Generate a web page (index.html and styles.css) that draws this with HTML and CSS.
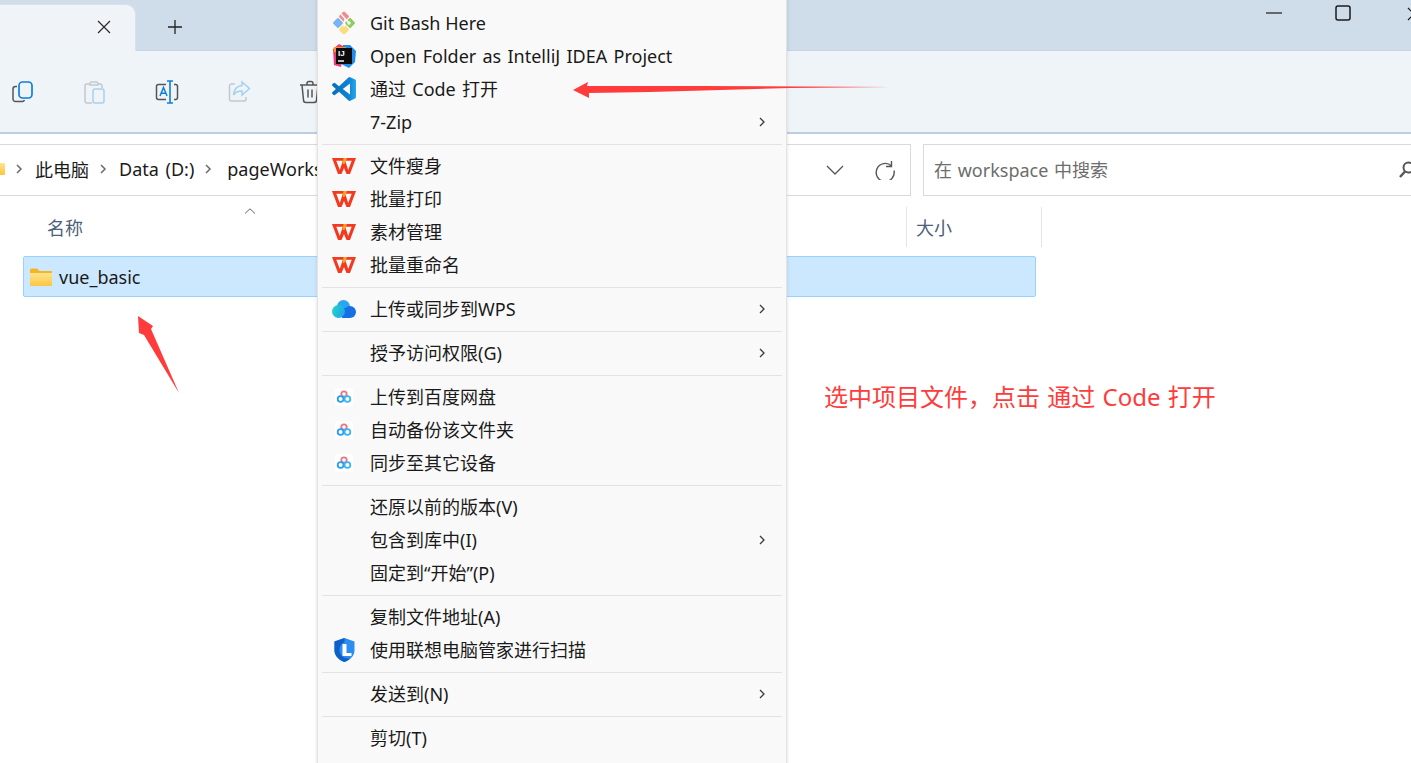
FILE: index.html
```html
<!DOCTYPE html>
<html>
<head>
    <title>vue_basic - 通过 Code 打开</title>
    <link rel="stylesheet" href="styles.css">
</head>
<body>
    <svg class="defs" width="0" height="0">
        <defs>
            <linearGradient id="cloudGrad" x1="0" y1="0" x2="1" y2="0.4">
                <stop offset="0" stop-color="#1fd8c4"/>
                <stop offset="1" stop-color="#23a8ea"/>
            </linearGradient>
            <linearGradient id="codeGrad" x1="0" y1="0" x2="1" y2="0">
                <stop offset="0" stop-color="#0c6fb8"/>
                <stop offset="0.7" stop-color="#0b84d4"/>
                <stop offset="1" stop-color="#2aa7ee"/>
            </linearGradient>
            <linearGradient id="folderGrad" x1="0" y1="0" x2="0" y2="1">
                <stop offset="0" stop-color="#ffe38f"/>
                <stop offset="1" stop-color="#fcc63f"/>
            </linearGradient>
            <symbol id="wps" viewBox="0 0 24 18">
                <path fill="#f4391f" fill-rule="evenodd" d="M0 1h24l-6 16h-3.500L12 11 9.500 17H6zM4.300 3.800L7.800 13l3-9.200zM13.200 3.800L16.200 13l3.500-9.200z"/>
                <path fill="#f8a51d" d="M11.500 1h3.500l-2.500 6h-1.800z"/>
            </symbol>
            <symbol id="baidu" viewBox="0 0 18 18">
                <rect width="18" height="18" rx="4" fill="#fff"/>
                <circle cx="9" cy="6" r="2.700" fill="none" stroke="#e8748a" stroke-width="1.800"/>
                <circle cx="5.600" cy="11" r="2.900" fill="none" stroke="#2b9cf0" stroke-width="1.800"/>
                <circle cx="12.400" cy="11" r="2.900" fill="none" stroke="#35b8f2" stroke-width="1.800"/>
            </symbol>
            <symbol id="more" viewBox="0 0 8 12">
                <path d="M2 2l4 4-4 4" fill="none" stroke="#3c3c3c" stroke-width="1.300"/>
            </symbol>
            <symbol id="crumb" viewBox="0 0 8 12">
                <path d="M2 2l4 4-4 4" fill="none" stroke="#6a6a6a" stroke-width="1.500"/>
            </symbol>
        </defs>
    </svg>

    <div class="explorer">
        <div class="tabstrip">
            <div class="tab">
                <svg class="tab-close" width="14" height="14" viewBox="0 0 14 14"><path d="M1 1l12 12M13 1L1 13" stroke="#2a2a2a" stroke-width="1.200"/></svg>
            </div>
            <svg class="tab-add" width="16" height="16" viewBox="0 0 16 16"><path d="M8 1v14M1 8h14" stroke="#222" stroke-width="1.300"/></svg>
            <div class="winctl">
                <svg class="win-min" width="16" height="2" viewBox="0 0 16 2"><path d="M0 1h16" stroke="#1c1c1c" stroke-width="1.200"/></svg>
                <svg class="win-max" width="16" height="16" viewBox="0 0 16 16"><rect x="1" y="1" width="14" height="14" rx="2" fill="none" stroke="#1c1c1c" stroke-width="1.500"/></svg>
                <svg class="win-close" width="14" height="14" viewBox="0 0 14 14"><path d="M1 1l12 12M13 1L1 13" stroke="#1c1c1c" stroke-width="1.200"/></svg>
            </div>
        </div>

        <div class="toolbar">
            <svg class="tool" width="24" height="24" viewBox="0 0 24 24">
                <path d="M6 6.500H4.500A2.500 2.500 0 0 0 2 9v10a2.500 2.500 0 0 0 2.500 2.500H11a2.500 2.500 0 0 0 2.500-1.500" fill="none" stroke="#555" stroke-width="1.500"/>
                <rect x="8" y="2" width="13" height="16" rx="3.500" fill="none" stroke="#0f7fd6" stroke-width="1.700"/>
            </svg>
            <svg class="tool" width="24" height="24" viewBox="0 0 24 24">
                <path d="M7 4H4a2 2 0 0 0-2 2v15a2 2 0 0 0 2 2h5" fill="none" stroke="#c4c8cc" stroke-width="1.500"/>
                <path d="M7 5V3.500A1.500 1.500 0 0 1 8.500 2h5A1.500 1.500 0 0 1 15 3.500V5zM15 4h2a2 2 0 0 1 2 2v2" fill="none" stroke="#c4c8cc" stroke-width="1.500"/>
                <rect x="10" y="9" width="11" height="14" rx="2" fill="none" stroke="#a6d0f0" stroke-width="1.500"/>
            </svg>
            <svg class="tool" width="24" height="24" viewBox="0 0 24 24">
                <path d="M11 4.500H3.500A2 2 0 0 0 1.500 6.500v11a2 2 0 0 0 2 2H11M19 4.500h1.500a2 2 0 0 1 2 2v11a2 2 0 0 1-2 2H19" fill="none" stroke="#555" stroke-width="1.500"/>
                <path d="M15 1v22M12 1h6M12 23h6" fill="none" stroke="#0f7fd6" stroke-width="1.600"/>
                <path d="M5 16l3.500-8.500L12 16M6.200 13.300h4.600" fill="none" stroke="#0f7fd6" stroke-width="1.500"/>
            </svg>
            <svg class="tool" width="24" height="24" viewBox="0 0 24 24">
                <path d="M8 4H4.500a2 2 0 0 0-2 2v13a2 2 0 0 0 2 2H17a2 2 0 0 0 2-2v-2" fill="none" stroke="#c4c8cc" stroke-width="1.500"/>
                <path d="M15 2l7.500 6.500L15 15v-4c-4 0-6.500 1-8.500 4 .5-5 3.500-9 8.500-9.500z" fill="none" stroke="#a6d0f0" stroke-width="1.500"/>
            </svg>
            <svg class="tool" width="24" height="24" viewBox="0 0 24 24">
                <path d="M1 5h20M8 5V3.500A2 2 0 0 1 10 1.500h2a2 2 0 0 1 2 2V5M3 5l1.500 15a2.500 2.500 0 0 0 2.500 2.500h8a2.500 2.500 0 0 0 2.500-2.500L19 5M9 9.500v8M13 9.500v8" fill="none" stroke="#555" stroke-width="1.500"/>
            </svg>
        </div>

        <div class="addressrow">
            <div class="addressbox">
                <div class="crumbs">
                    <svg class="crumb-folder" width="5" height="12" viewBox="0 0 5 12"><rect x="-4" width="9" height="12" rx="1" fill="url(#folderGrad)"/></svg>
                    <svg class="crumb-sep" width="8" height="12"><use href="#crumb"/></svg>
                    <span>此电脑</span>
                    <svg class="crumb-sep" width="8" height="12"><use href="#crumb"/></svg>
                    <span>Data (D:)</span>
                    <svg class="crumb-sep" width="8" height="12"><use href="#crumb"/></svg>
                    <span class="crumb-last">pageWorkspace</span>
                </div>
                <div class="address-tools">
                    <svg width="18" height="10" viewBox="0 0 18 10"><path d="M1 1l8 8 8-8" fill="none" stroke="#555" stroke-width="1.300"/></svg>
                    <svg width="20" height="20" viewBox="0 0 20 20"><path d="M16.500 1v5.500H11M16.500 6A9 9 0 1 0 19 10.500" fill="none" stroke="#555" stroke-width="1.400"/></svg>
                </div>
            </div>
            <div class="searchbox">
                <span class="search-text">在 workspace 中搜索</span>
                <svg class="search-icon" width="16" height="18" viewBox="0 0 16 18"><circle cx="9.500" cy="6.500" r="5" fill="none" stroke="#555" stroke-width="2"/><path d="M6 10.500L1 16" stroke="#555" stroke-width="2.400"/></svg>
            </div>
        </div>

        <div class="columns">
            <div class="col col-name">
                名称
                <svg class="sort" width="12" height="6" viewBox="0 0 12 6"><path d="M1 5.500L6 .8l5 4.700" fill="none" stroke="#666" stroke-width="1"/></svg>
            </div>
            <div class="col col-size">大小</div>
        </div>

        <div class="filerow">
            <svg width="22" height="18" viewBox="0 0 22 18"><path d="M0 2a1.500 1.500 0 0 1 1.500-1.500H7L9.500 3H22v14a1 1 0 0 1-1 1H1a1 1 0 0 1-1-1z" fill="#f3b526"/><path d="M0 5h22v12a1 1 0 0 1-1 1H1a1 1 0 0 1-1-1z" fill="url(#folderGrad)"/></svg>
            <span>vue_basic</span>
        </div>
    </div>

    <div class="menu">
        <div class="item"><span class="icon"><svg width="24" height="24" viewBox="0 0 24 24"><circle cx="12" cy="16" r="6" fill="#fbd75b"/></svg></span></div>
        <div class="item">
            <span class="icon"><svg width="24" height="24" viewBox="0 0 24 24">
                <rect x="8.200" y="1.700" width="7.600" height="7.600" rx="1" transform="rotate(45 12 5.500)" fill="#f48a8a"/>
                <rect x="2.200" y="8.200" width="7.600" height="7.600" rx="1" transform="rotate(45 6 12)" fill="#78b4f2"/>
                <rect x="14.200" y="8.200" width="7.600" height="7.600" rx="1" transform="rotate(45 18 12)" fill="#8ccc5c"/>
                <rect x="8.200" y="14.700" width="7.600" height="7.600" rx="1" transform="rotate(45 12 18.500)" fill="#fbdc7c"/>
                <path d="M9 3l8 9M13 8l-1 8" stroke="#fff" stroke-width="1.400"/>
                <circle cx="17" cy="12" r="1.700" fill="#fff"/>
            </svg></span>
            <span class="label latin">Git Bash Here</span>
        </div>
        <div class="item">
            <span class="icon"><svg width="26" height="26" viewBox="0 0 26 26">
                <path d="M2 6l6-5 6 3-4 20-7-2z" fill="#f0397a"/>
                <path d="M12 2h7l6 6-1 11-6 6-8-4z" fill="#1f8eea"/>
                <path d="M3 4h12v5H3z" fill="#f7941e"/>
                <rect x="5" y="5" width="16" height="16" fill="#0b0b0b"/>
                <text class="ij" x="7" y="13">IJ</text>
                <path d="M7 18h6" stroke="#fff" stroke-width="1.400"/>
            </svg></span>
            <span class="label latin wide">Open Folder as IntelliJ IDEA Project</span>
        </div>
        <div class="item">
            <span class="icon"><svg width="24" height="24" viewBox="0 0 24 24"><path fill="url(#codeGrad)" d="M23.150 2.587L18.210.21a1.494 1.494 0 0 0-1.705.29l-9.460 8.630-4.120-3.128a.999.999 0 0 0-1.276.057L.327 7.261A1 1 0 0 0 .326 8.740L3.899 12 .326 15.260a1 1 0 0 0 .001 1.479L1.650 17.940a.999.999 0 0 0 1.276.057l4.120-3.128 9.460 8.630a1.492 1.492 0 0 0 1.704.290l4.942-2.377A1.500 1.500 0 0 0 24 20.060V3.939a1.500 1.500 0 0 0-.850-1.352zm-5.146 14.861L10.826 12l7.178-5.448v10.896z"/></svg></span>
            <span class="label wide">通过 Code 打开</span>
        </div>
        <div class="item">
            <span class="icon"></span>
            <span class="label latin">7-Zip</span>
            <svg class="more" width="8" height="12"><use href="#more"/></svg>
        </div>
        <div class="sep"></div>
        <div class="item"><span class="icon"><svg width="24" height="18"><use href="#wps"/></svg></span><span class="label">文件瘦身</span></div>
        <div class="item"><span class="icon"><svg width="24" height="18"><use href="#wps"/></svg></span><span class="label">批量打印</span></div>
        <div class="item"><span class="icon"><svg width="24" height="18"><use href="#wps"/></svg></span><span class="label">素材管理</span></div>
        <div class="item"><span class="icon"><svg width="24" height="18"><use href="#wps"/></svg></span><span class="label">批量重命名</span></div>
        <div class="sep"></div>
        <div class="item">
            <span class="icon"><svg width="24" height="18" viewBox="0 0 24 18">
                <circle cx="11.500" cy="6.500" r="6.500" fill="#2aa5f0"/>
                <circle cx="18" cy="12" r="6" fill="#1670e4"/>
                <path d="M10 8h8v10h-8z" fill="#1670e4"/>
                <circle cx="6.500" cy="11.500" r="6.500" fill="url(#cloudGrad)"/>
            </svg></span>
            <span class="label">上传或同步到WPS</span>
            <svg class="more" width="8" height="12"><use href="#more"/></svg>
        </div>
        <div class="sep"></div>
        <div class="item">
            <span class="icon"></span>
            <span class="label">授予访问权限(G)</span>
            <svg class="more" width="8" height="12"><use href="#more"/></svg>
        </div>
        <div class="sep"></div>
        <div class="item"><span class="icon"><svg width="18" height="18"><use href="#baidu"/></svg></span><span class="label">上传到百度网盘</span></div>
        <div class="item"><span class="icon"><svg width="18" height="18"><use href="#baidu"/></svg></span><span class="label">自动备份该文件夹</span></div>
        <div class="item"><span class="icon"><svg width="18" height="18"><use href="#baidu"/></svg></span><span class="label">同步至其它设备</span></div>
        <div class="sep"></div>
        <div class="item"><span class="icon"></span><span class="label">还原以前的版本(V)</span></div>
        <div class="item">
            <span class="icon"></span>
            <span class="label">包含到库中(I)</span>
            <svg class="more" width="8" height="12"><use href="#more"/></svg>
        </div>
        <div class="item"><span class="icon"></span><span class="label">固定到“开始”(P)</span></div>
        <div class="sep"></div>
        <div class="item"><span class="icon"></span><span class="label">复制文件地址(A)</span></div>
        <div class="item">
            <span class="icon"><svg width="23" height="24" viewBox="0 0 22 24">
                <path d="M11 0l10 3.500v9c0 5.500-4.500 9.500-10 11.500C5.500 22 1 18 1 12.500v-9z" fill="#2b8df0"/>
                <path d="M11 0L1 3.500v9C1 18 5.500 22 11 24c2-1 4-2 5.500-3.500C9 21 5.500 16 6 11c.3-3 2.500-6 5-7z" fill="#0f5fc4"/>
                <path d="M9 6h4v9h5v3H9z" fill="#fff"/>
            </svg></span>
            <span class="label">使用联想电脑管家进行扫描</span>
        </div>
        <div class="sep"></div>
        <div class="item">
            <span class="icon"></span>
            <span class="label">发送到(N)</span>
            <svg class="more" width="8" height="12"><use href="#more"/></svg>
        </div>
        <div class="sep"></div>
        <div class="item"><span class="icon"></span><span class="label">剪切(T)</span></div>
    </div>

    <svg class="arrows" width="1411" height="763" viewBox="0 0 1411 763">
        <path fill="#ff3b3b" d="M573 90L588 82 587 86 700 86 890 87 790 88 650 92 589 93 589 98z"/>
        <path fill="#ff3b3b" d="M138 316L153 326 151 329 179 393 144 335 139 333z"/>
    </svg>

    <div class="note">选中项目文件，点击 通过 Code 打开</div>
</body>
</html>
```

FILE: styles.css
```css
body {
    margin: 0;
    height: 763px;
    overflow: hidden;
    position: relative;
    background-color: #fff;
    font-family: "Noto Sans", "Noto Sans CJK SC", sans-serif;
    font-size: 18px;
    color: #1a1a1a;
}
.defs {
    display: block;
    height: 0;
}
.tabstrip {
    height: 51px;
    background-color: #cfdcea;
    display: flex;
    align-items: flex-start;
    box-sizing: border-box;
    border-bottom: 1px solid #c6d4e3;
}
.tab {
    width: 136px;
    height: 47px;
    margin-top: 4px;
    background-color: #f0f4f9;
    border-radius: 0 10px 0 0;
    border-top: 1px solid #d8e1ec;
    border-right: 1px solid #d8e1ec;
    box-sizing: border-box;
    display: flex;
    justify-content: flex-end;
    padding: 15px 24px 0 0;
}
.tab-add {
    margin: 19px 0 0 31px;
}
.winctl {
    margin-left: auto;
    display: flex;
    align-items: flex-start;
    margin-right: -10px;
}
.win-min {
    margin-top: 12px;
}
.win-max {
    margin: 5px 0 0 53px;
}
.win-close {
    margin: 7px 0 0 56px;
}
.toolbar {
    height: 83px;
    box-sizing: border-box;
    background-color: #eff4f9;
    border-bottom: 2px solid #bfcede;
    display: flex;
    align-items: center;
    gap: 48px;
    padding-left: 11px;
}
.addressrow {
    display: flex;
    gap: 12px;
    padding-top: 10px;
    height: 62px;
    box-sizing: border-box;
}
.addressbox {
    width: 912px;
    height: 52px;
    margin-left: -1px;
    box-sizing: border-box;
    border: 1px solid #d9d9d9;
    display: flex;
    align-items: center;
    justify-content: space-between;
    padding-right: 15px;
}
.crumbs {
    display: flex;
    align-items: center;
    word-spacing: 2px;
    margin-top: -2px;
}
.crumb-sep {
    margin: 0 12px 0 10px;
}
.crumb-last {
    margin-left: 3px;
}
.address-tools {
    display: flex;
    align-items: center;
    gap: 31px;
}
.searchbox {
    flex: 1;
    height: 52px;
    margin-right: -20px;
    box-sizing: border-box;
    border: 1px solid #d9d9d9;
    display: flex;
    align-items: center;
    justify-content: space-between;
    padding: 0 10px;
    color: #6d6d6d;
}
.search-text {
    word-spacing: 1px;
    margin-top: -2px;
}
.search-icon {
    margin-right: 5px;
}
.columns {
    height: 40px;
    margin-top: 11px;
    display: flex;
    color: #4c607a;
}
.col {
    display: flex;
    align-items: center;
    position: relative;
}
.col-name {
    width: 906px;
    padding-left: 47px;
    box-sizing: border-box;
}
.col-size {
    width: 136px;
    padding-left: 9px;
    box-sizing: border-box;
    border-left: 1px solid #e5e5e5;
    border-right: 1px solid #e5e5e5;
}
.sort {
    position: absolute;
    left: 244px;
    top: 1px;
}
.filerow {
    width: 1013px;
    height: 41px;
    margin: 9px 0 0 23px;
    box-sizing: border-box;
    background-color: #cce8ff;
    border: 1px solid #99d1ff;
    border-radius: 2px;
    display: flex;
    align-items: center;
    gap: 7px;
    padding-left: 6px;
}
.menu {
    position: absolute;
    left: 317px;
    top: -28px;
    width: 470px;
    height: 800px;
    box-sizing: border-box;
    background-color: #f9f9f9;
    border: 1px solid #e3e3e3;
    box-shadow: 0 0 4px rgba(0, 0, 0, 0.12);
    padding-top: 0.5px;
}
.item {
    height: 33px;
    display: flex;
    align-items: center;
}
.icon {
    width: 52px;
    height: 33px;
    flex: none;
    display: flex;
    align-items: center;
    justify-content: center;
}
.label {
    flex: 1;
    white-space: nowrap;
    padding-bottom: 3px;
}
.latin {
    padding-bottom: 1px;
}
.wide {
    word-spacing: 1.600px;
}
.more {
    margin-right: 20px;
}
.sep {
    height: 1px;
    margin: 5px 4px;
    background-color: #e2e2e2;
}
.ij {
    font-family: "Liberation Sans", sans-serif;
    font-size: 8px;
    font-weight: bold;
    fill: #fff;
}
.arrows {
    position: absolute;
    left: 0;
    top: 0;
    pointer-events: none;
}
.note {
    position: absolute;
    left: 824px;
    top: 379px;
    font-size: 24px;
    line-height: 36px;
    word-spacing: 1px;
    color: #ff3b3b;
    white-space: nowrap;
}
```
